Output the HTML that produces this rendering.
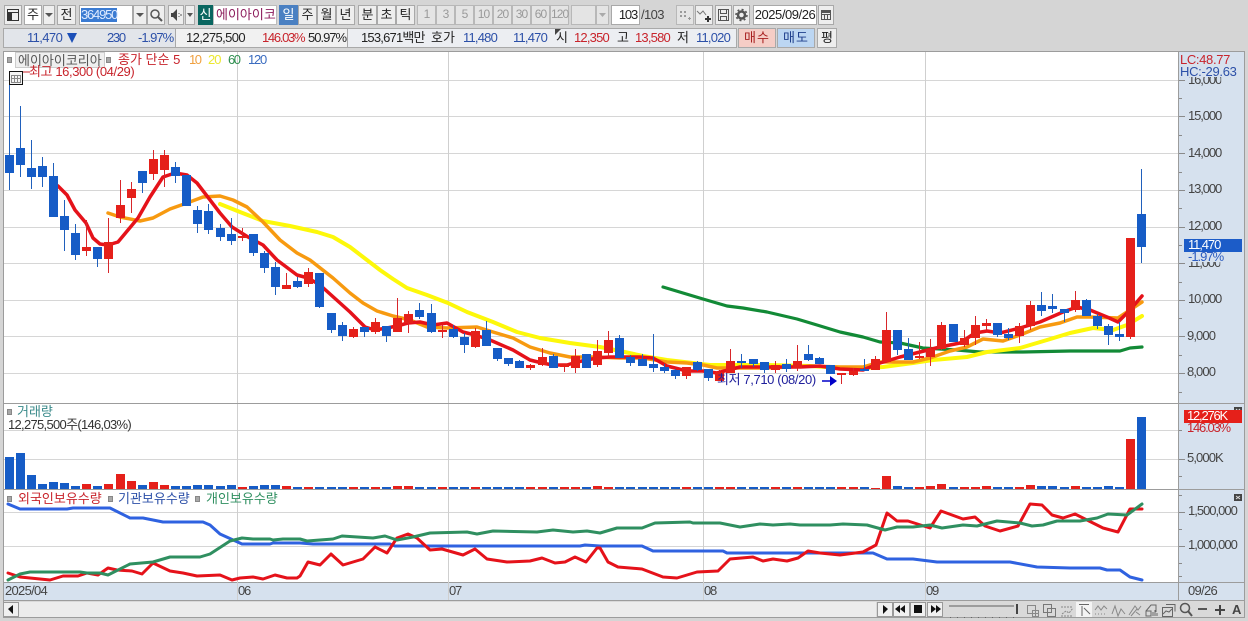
<!DOCTYPE html>
<html><head><meta charset="utf-8"><style>
html,body{margin:0;padding:0}
body{width:1248px;height:621px;overflow:hidden;background:#d5d5d5;position:relative;font:13px "Liberation Sans","Noto Sans CJK KR",sans-serif;color:#222}
.b,.t{position:absolute;box-sizing:border-box;white-space:nowrap}
.t{line-height:14px;height:14px}
.b{border:1px solid #a9a9a9;background:#eeeeee;text-align:center;line-height:17px;height:20px;top:5px}
.d{color:#999;background:#e4e4e4;border-color:#b8b8b8;font-size:12px;letter-spacing:-.9px}
.w{background:#fff}
.r{color:#c8242c}.bl{color:#2c50a8}
.a{color:#444;letter-spacing:-1.1px}
svg{position:absolute;left:0;top:0}
</style></head><body>
<!-- row 1 -->
<div class="b" style="left:4px;width:18px"><svg width="16" height="18"><path d="M2.500 3.500h11v11h-11zM2.500 6.500h11M6.500 6.500v8" fill="none" stroke="#333"/><path d="M3 7h3v7H3z" fill="#333"/></svg></div>
<div class="b w" style="left:24px;width:18px">주</div>
<div class="b" style="left:43px;width:12px"><svg width="10" height="18"><path d="M1 7h8L5 11z" fill="#555"/></svg></div>
<div class="b" style="left:57px;width:19px">전</div>
<div class="b w" style="left:79px;width:54px"></div>
<div class="t" style="left:81px;top:8px;width:36px;background:#3b7bd2;color:#dfeaff;letter-spacing:-1.2px">364950</div>
<div class="b" style="left:133px;width:14px"><svg width="12" height="18"><path d="M2 7h8L6 11z" fill="#555"/></svg></div>
<div class="b" style="left:147px;width:18px"><svg width="16" height="18"><circle cx="7" cy="8" r="4" fill="none" stroke="#555" stroke-width="1.500"/><path d="M10 11l4 4" stroke="#555" stroke-width="2"/></svg></div>
<div class="b" style="left:168px;width:16px"><svg width="14" height="18"><path d="M2 7h2l4-4v12l-4-4H2z" fill="#444"/><path d="M10 7v1M10 10v1M12 8v2" stroke="#555"/></svg></div>
<div class="b" style="left:185px;width:10px"><svg width="8" height="18"><path d="M1 7h6L4 11z" fill="#555"/></svg></div>
<div class="b" style="left:198px;width:15px;background:#0a6660;color:#fff;border-color:#0a6660">신</div>
<div class="b w" style="left:213px;width:64px;overflow:hidden;color:#8c1c5c;text-align:left;padding-left:2px;border-color:#bbb">에이아이코</div>
<div class="b" style="left:279px;width:19px;background:#4a80c2;color:#fff;border-color:#4a80c2">일</div>
<div class="b" style="left:298px;width:19px">주</div><div class="b" style="left:317px;width:19px">월</div><div class="b" style="left:336px;width:19px">년</div>
<div class="b" style="left:358px;width:19px">분</div><div class="b" style="left:377px;width:19px">초</div><div class="b" style="left:396px;width:19px">틱</div>
<div class="b d" style="left:417px;width:19px">1</div><div class="b d" style="left:436px;width:19px">3</div><div class="b d" style="left:455px;width:19px">5</div><div class="b d" style="left:474px;width:19px">10</div><div class="b d" style="left:493px;width:19px">20</div><div class="b d" style="left:512px;width:19px">30</div><div class="b d" style="left:531px;width:19px">60</div><div class="b d" style="left:550px;width:19px">120</div>
<div class="b d" style="left:571px;width:25px"></div>
<div class="b d" style="left:596px;width:13px"><svg width="11" height="18"><path d="M2 7h7L5.500 11z" fill="#aaa"/></svg></div>
<div class="b w" style="left:611px;width:29px;text-align:right;padding-right:2px;letter-spacing:-1.2px">103</div>
<div class="t" style="left:641px;top:8px;color:#444;letter-spacing:-.6px">/103</div>
<div class="b d" style="left:676px;width:18px"><svg width="16" height="18"><path d="M3 5h2v2H3zM7 5h2v2H7zM3 9h2v2H3zM7 9h2v2H7zM11 12h3v1h-3zM12 11h1v3h-1z" fill="#999"/></svg></div>
<div class="b" style="left:695px;width:18px"><svg width="16" height="18"><path d="M1 5l3 3 3-3 3 4" fill="none" stroke="#777"/><path d="M9 12h6v2H9zM11 10h2v6h-2z" fill="#333"/></svg></div>
<div class="b" style="left:715px;width:17px"><svg width="15" height="18"><path d="M2.500 3.500h10v11h-10zM4.500 3.500v4h6v-4M4.500 14.500v-4h6v4" fill="none" stroke="#555"/></svg></div>
<div class="b" style="left:733px;width:17px"><svg width="15" height="18"><circle cx="7.500" cy="9" r="3.500" fill="none" stroke="#555" stroke-width="2.500"/><circle cx="7.500" cy="9" r="5.500" fill="none" stroke="#555" stroke-width="1.500" stroke-dasharray="2 2.300"/></svg></div>
<div class="b w" style="left:753px;width:64px;letter-spacing:-.45px">2025/09/26</div>
<div class="b" style="left:818px;width:16px"><svg width="14" height="18"><path d="M2.500 4.500h9v9h-9zM2.500 8.500h9M5.500 8.500v5M8.500 8.500v5" fill="none" stroke="#555"/><path d="M2 4h10v3H2z" fill="#555"/></svg></div>
<!-- row 2 -->
<div style="position:absolute;left:3px;top:28px;width:173px;height:20px;background:#e2e5ea;border:1px solid #a9a9a9;box-sizing:border-box"></div>
<div style="position:absolute;left:176px;top:28px;width:171px;height:20px;background:#f1f1f1;border-top:1px solid #a9a9a9;border-bottom:1px solid #a9a9a9;box-sizing:border-box"></div>
<div style="position:absolute;left:347px;top:28px;width:390px;height:20px;background:#eceef2;border:1px solid #a9a9a9;box-sizing:border-box"></div>
<div class="t bl" style="left:27px;top:31px;letter-spacing:-.6px">11,470</div>
<svg width="90" height="48"><path d="M67 33h10l-5 10z" fill="#1c4fb8"/></svg>
<div class="t bl" style="left:107px;top:31px;letter-spacing:-1.300px">230</div>
<div class="t bl" style="left:138px;top:31px;letter-spacing:-1px">-1.97%</div>
<div class="t" style="left:186px;top:31px;letter-spacing:-.6px">12,275,500</div>
<div class="t r" style="left:262px;top:31px;letter-spacing:-1.300px">146.03%</div>
<div class="t" style="left:308px;top:31px;letter-spacing:-1px">50.97%</div>
<div class="t" style="left:361px;top:31px;letter-spacing:-.8px">153,671백만</div>
<div class="t" style="left:431px;top:31px">호가</div>
<div class="t bl" style="left:463px;top:31px;letter-spacing:-.8px">11,480</div>
<div class="t bl" style="left:513px;top:31px;letter-spacing:-.8px">11,470</div>
<svg width="570" height="48"><path d="M555 29h6l-6 6z" fill="#444"/></svg>
<div class="t" style="left:556px;top:31px">시</div>
<div class="t r" style="left:574px;top:31px;letter-spacing:-.8px">12,350</div>
<div class="t" style="left:617px;top:31px">고</div>
<div class="t r" style="left:635px;top:31px;letter-spacing:-.8px">13,580</div>
<div class="t" style="left:677px;top:31px">저</div>
<div class="t bl" style="left:696px;top:31px;letter-spacing:-.8px">11,020</div>
<div class="b" style="left:738px;top:28px;width:38px;background:#f5cdc6;color:#a82020;letter-spacing:1px">매수</div>
<div class="b" style="left:777px;top:28px;width:38px;background:#bcd6f2;color:#20408c;letter-spacing:1px">매도</div>
<div class="b" style="left:817px;top:28px;width:20px">평</div>
<!-- chart frame -->
<div style="position:absolute;left:3px;top:51px;width:1242px;height:567px;background:#fff;border:1px solid #9c9c9c;box-sizing:border-box"></div>
<div style="position:absolute;left:1178px;top:52px;width:66px;height:530px;background:#d6e1ee;border-left:1px solid #9c9c9c;box-sizing:border-box"></div>
<div style="position:absolute;left:4px;top:582px;width:1240px;height:19px;background:#d6e1ee;border-top:1px solid #9c9c9c;border-bottom:1px solid #9c9c9c;box-sizing:border-box"></div>
<div style="position:absolute;left:4px;top:601px;width:1240px;height:16px;background:#d9d9d9"></div>
<div style="position:absolute;left:19px;top:602px;width:857px;height:15px;background:#ececec"></div>
<svg width="1248" height="621">
<g stroke="#d6d6d6" fill="none">
<path d="M4 80.500H1178M4 116.500H1178M4 153.500H1178M4 190.500H1178M4 227.500H1178M4 263.500H1178M4 300.500H1178M4 336.500H1178M4 373.500H1178M4 430.500H1178M4 459.500H1178M4 512.500H1178M4 546.500H1178"/>
<path stroke="#cfcfcf" d="M237.500 52V600M448.500 52V600M703.500 52V600M925.500 52V600"/>
</g>
<path d="M4 403.500H1244M4 489.500H1244M1178.500 582V600" stroke="#9c9c9c" fill="none"/>
<!-- axis ticks -->
<path stroke="#8a8a8a" fill="none" d="M1179 80.500h6M1179 116.500h6M1179 153.500h6M1179 190.500h6M1179 227.500h6M1179 263.500h6M1179 300.500h6M1179 336.500h6M1179 373.500h6M1179 98.500h3M1179 135.500h3M1179 172.500h3M1179 208.500h3M1179 245.500h3M1179 282.500h3M1179 318.500h3M1179 355.500h3M1179 392.500h3M1179 459.500h6M1179 430.500h3M1179 476.500h3M1179 512.500h6M1179 546.500h6M1179 495.500h3M1179 529.500h3M1179 563.500h3M1179 576.500h3"/>
<!-- moving averages -->
<g fill="none" stroke-linejoin="round" stroke-linecap="round">
<polyline stroke="#128a36" stroke-width="3.200" points="663,287 683,293 703,299 727,306 743,308 767,312 797,319 817,325 840,332 863,337 880,342 900,343 923,348 957,350 980,352 1023,352 1070,351 1120,351 1130,348 1142,347"/>
<polyline stroke="#fdf80a" stroke-width="4" points="220,204 240,212 263,221 290,226 317,232 333,237 350,247 380,270 393,279 407,288 427,295 448,303 467,312 493,322 517,332 540,338 570,343 600,347 620,351 643,356 667,360 693,363 710,365 733,365 767,365 810,366 840,368 863,368 883,367 913,363 933,360 967,357 987,352 1020,348 1047,340 1070,333 1093,328 1113,330 1127,325 1142,316"/>
<polyline stroke="#f79a10" stroke-width="3.500" points="108,213 120,217 140,221 153,218 170,209 187,203 203,197 220,196 233,200 247,207 263,222 280,240 297,253 310,260 333,278 350,293 363,303 377,311 393,316 410,320 427,327 447,328 477,327 493,332 513,338 530,347 550,353 570,357 597,357 620,358 643,358 667,362 687,363 703,365 717,368 743,368 767,368 810,366 840,367 863,367 880,362 913,362 930,358 950,351 967,347 983,339 1003,341 1020,335 1040,327 1060,323 1077,317 1090,317 1118,318 1130,310 1142,302"/>
<polyline stroke="#e5121a" stroke-width="3.500" points="58,186 67,195 75,210 86,223 93,238 100,244 108,245 118,242 128,230 138,218 150,197 163,177 175,173 187,175 197,183 207,196 220,213 232,227 248,237 263,245 277,260 297,275 308,278 320,285 350,312 365,327 375,330 387,328 397,326 408,323 420,322 433,325 447,323 463,332 475,335 490,340 513,350 530,360 542,363 553,365 567,365 577,362 597,358 610,357 620,357 640,357 653,358 667,366 687,371 703,371 717,373 728,370 740,367 767,367 800,367 820,366 840,369 863,370 880,363 900,357 920,352 940,347 960,343 975,333 987,331 1000,333 1020,328 1040,322 1063,312 1077,307 1090,310 1107,317 1118,322 1130,310 1142,296"/>
</g>
<!-- wicks -->
<path fill="none" stroke="#2060bc" d="M9.500 72V190M20.500 106V177M31.500 140V189M42.500 157V187M53.500 163V217M64.500 200V251M75.500 224V260M97.500 247V267M142.500 171V193M175.500 162V183M186.500 175V206M197.500 206V233M208.500 204V234M220.500 224V241M231.500 218V245M253.500 234V256M264.500 251V273M275.500 262V295M297.500 277V288M319.500 273V308M331.500 313V333M342.500 322V341M364.500 327V337M386.500 326V342M419.500 303V319M431.500 304V333M453.500 325V338M464.500 333V353M486.500 321V346M497.500 348V361M508.500 358V366M519.500 360V368M553.500 354V368M586.500 354V368M619.500 335V358M630.500 355V366M642.500 354V366M653.500 334V372M664.500 364V373M675.500 369V379M697.500 361V371M708.500 369V381M741.500 354V368M753.500 359V367M764.500 362V373M786.500 359V372M808.500 345V361M819.500 357V364M830.500 365V374M864.500 359V371M897.500 330V355M908.500 338V360M953.500 324V342M997.500 323V337M1008.500 328V340M1041.500 292V316M1052.500 294V313M1064.500 309V322M1086.500 299V316M1097.500 314V329M1108.500 324V345M1119.500 322V341M1141.500 169V263"/>
<path fill="none" stroke="#d8262a" d="M86.500 220V256M108.500 218V273M120.500 180V223M131.500 182V213M153.500 150V180M164.500 150V187M242.500 228V241M286.500 273V289M308.500 268V287M353.500 327V338M375.500 318V334M397.500 298V332M408.500 311V333M442.500 325V338M475.500 328V348M530.500 364V370M542.500 348V366M564.500 364V372M575.500 349V373M597.500 340V367M608.500 331V357M686.500 367V379M719.500 370V381M730.500 349V373M775.500 361V373M797.500 345V371M841.500 373V384M853.500 368V376M875.500 356V370M886.500 312V362M919.500 342V359M930.500 339V366M941.500 322V350M964.500 330V347M975.500 316V345M986.500 319V330M1019.500 323V343M1030.500 301V330M1075.500 291V312M1130.500 238V339"/>
<!-- bodies -->
<path fill="#165cc6" d="M5 155h9V173h-9zM16 148h9V165h-9zM27 168h9V177h-9zM38 166h9V177h-9zM49 176h9V217h-9zM60 216h9V230h-9zM71 233h9V255h-9zM93 247h9V259h-9zM138 171h9V183h-9zM171 167h9V176h-9zM182 175h9V206h-9zM193 210h9V224h-9zM204 211h9V230h-9zM216 228h9V237h-9zM227 234h9V241h-9zM249 234h9V253h-9zM260 253h9V268h-9zM271 267h9V287h-9zM293 281h9V287h-9zM315 273h9V307h-9zM327 313h9V330h-9zM338 325h9V336h-9zM360 327h9V332h-9zM382 326h9V336h-9zM415 310h9V317h-9zM427 313h9V332h-9zM449 329h9V337h-9zM460 337h9V345h-9zM482 330h9V346h-9zM493 348h9V359h-9zM504 358h9V364h-9zM515 361h9V368h-9zM549 356h9V368h-9zM582 354h9V368h-9zM615 338h9V358h-9zM626 357h9V363h-9zM638 359h9V366h-9zM649 364h9V368h-9zM660 367h9V371h-9zM671 370h9V376h-9zM693 362h9V370h-9zM704 369h9V378h-9zM737 361h9V363h-9zM749 359h9V364h-9zM760 362h9V370h-9zM782 364h9V369h-9zM804 354h9V360h-9zM815 358h9V364h-9zM826 365h9V374h-9zM860 369h9V371h-9zM893 330h9V350h-9zM904 349h9V360h-9zM949 324h9V342h-9zM993 323h9V335h-9zM1004 334h9V338h-9zM1037 305h9V311h-9zM1048 306h9V309h-9zM1060 309h9V313h-9zM1082 300h9V316h-9zM1093 316h9V326h-9zM1104 326h9V335h-9zM1115 334h9V337h-9zM1137 214h9V247h-9z"/>
<path fill="#e5201a" d="M82 247h9V251h-9zM104 242h9V259h-9zM116 205h9V218h-9zM127 189h9V198h-9zM149 159h9V174h-9zM160 155h9V170h-9zM238 236h9V238h-9zM282 285h9V289h-9zM304 272h9V284h-9zM349 329h9V337h-9zM371 322h9V332h-9zM393 318h9V332h-9zM404 314h9V323h-9zM438 330h9V332h-9zM471 331h9V347h-9zM526 365h9V368h-9zM538 357h9V365h-9zM560 364h9V367h-9zM571 356h9V368h-9zM593 351h9V365h-9zM604 340h9V353h-9zM682 367h9V376h-9zM715 372h9V381h-9zM726 361h9V373h-9zM771 365h9V370h-9zM793 361h9V368h-9zM837 373h9V375h-9zM849 371h9V375h-9zM871 359h9V370h-9zM882 330h9V362h-9zM915 356h9V358h-9zM926 349h9V357h-9zM937 325h9V349h-9zM960 338h9V345h-9zM971 325h9V338h-9zM982 323h9V326h-9zM1015 326h9V336h-9zM1026 305h9V326h-9zM1071 300h9V310h-9zM1126 238h9V337h-9z"/>
<!-- volume -->
<path fill="#165cc6" d="M5 457h9V489h-9zM16 453h9V489h-9zM27 475h9V489h-9zM38 484h9V489h-9zM49 482h9V489h-9zM60 483h9V489h-9zM71 486h9V489h-9zM93 486h9V489h-9zM138 485h9V489h-9zM171 486h9V489h-9zM182 486h9V489h-9zM193 485h9V489h-9zM204 485h9V489h-9zM216 486h9V489h-9zM227 485h9V489h-9zM249 486h9V489h-9zM260 485h9V489h-9zM271 485h9V489h-9zM293 487h9V489h-9zM315 487h9v2h-9zM327 487h9v2h-9zM338 487h9v2h-9zM360 487h9v2h-9zM382 487h9v2h-9zM415 487h9v2h-9zM427 487h9v2h-9zM449 487h9v2h-9zM460 487h9v2h-9zM482 487h9v2h-9zM493 487h9v2h-9zM504 487h9v2h-9zM515 487h9v2h-9zM549 487h9v2h-9zM582 487h9v2h-9zM615 487h9v2h-9zM626 487h9v2h-9zM638 487h9v2h-9zM649 487h9v2h-9zM660 487h9v2h-9zM671 487h9v2h-9zM693 487h9v2h-9zM704 487h9v2h-9zM737 487h9v2h-9zM749 487h9v2h-9zM760 487h9v2h-9zM782 487h9v2h-9zM804 487h9v2h-9zM815 487h9v2h-9zM826 487h9v2h-9zM860 487h9v2h-9zM893 486h9v3h-9zM904 487h9v2h-9zM949 487h9v2h-9zM993 487h9v2h-9zM1004 487h9v2h-9zM1037 486h9v3h-9zM1048 486h9v3h-9zM1060 487h9v2h-9zM1082 487h9v2h-9zM1093 487h9v2h-9zM1104 486h9v3h-9zM1115 487h9v2h-9zM1137 417h9V489h-9z"/>
<path fill="#e5201a" d="M82 484h9V489h-9zM104 484h9V489h-9zM116 474h9V489h-9zM127 481h9V489h-9zM149 482h9V489h-9zM160 485h9V489h-9zM238 487h9V489h-9zM282 486h9V489h-9zM304 487h9v2h-9zM349 487h9v2h-9zM371 487h9v2h-9zM393 486h9v3h-9zM404 486h9v3h-9zM438 487h9v2h-9zM471 487h9v2h-9zM526 487h9v2h-9zM538 487h9v2h-9zM560 487h9v2h-9zM571 487h9v2h-9zM593 486h9v3h-9zM604 487h9v2h-9zM682 487h9v2h-9zM715 487h9v2h-9zM726 487h9v2h-9zM771 487h9v2h-9zM793 487h9v2h-9zM837 487h9v2h-9zM849 487h9v2h-9zM871 488h9v1h-9zM882 476h9V489h-9zM915 487h9v2h-9zM926 486h9v3h-9zM937 484h9v5h-9zM960 487h9v2h-9zM971 487h9v2h-9zM982 486h9v3h-9zM1015 487h9v2h-9zM1026 485h9v4h-9zM1071 486h9v3h-9zM1126 439h9V489h-9z"/>
<!-- indicators -->
<g fill="none" stroke-width="3" stroke-linejoin="round" stroke-linecap="round">
<polyline stroke="#2f62e0" points="8,504 20,509 67,509 73,508 110,508 130,518 143,518 163,522 203,522 210,525 220,534 242,544 270,544 273,543 300,543 313,544 390,544 395,546 580,546 585,545 600,546 642,546 653,551 723,551 727,553 873,553 887,559 913,559 937,562 1010,562 1037,567 1070,568 1100,568 1107,570 1120,570 1130,577 1142,580"/>
<polyline stroke="#e5121a" points="8,573 20,577 50,580 63,576 78,576 87,573 98,575 108,568 117,570 132,571 142,574 153,563 170,571 183,573 197,576 220,575 232,580 240,578 253,577 263,579 275,575 287,578 297,578 300,576 308,562 320,565 331,554 343,565 363,559 375,547 387,553 397,538 408,534 417,538 430,550 442,549 463,555 475,549 487,559 507,562 530,561 542,558 555,563 565,562 575,557 586,562 597,548 600,548 608,562 618,567 642,569 663,577 677,578 697,572 718,571 730,559 753,557 763,561 773,559 787,561 798,558 808,551 820,553 840,555 863,552 876,545 887,513 897,521 908,521 930,528 941,511 963,519 975,517 985,526 1000,531 1018,526 1030,504 1042,505 1052,515 1063,518 1075,514 1103,528 1118,532 1130,509 1142,509"/>
<polyline stroke="#2f8f60" points="8,580 20,574 30,572 80,572 87,573 100,573 108,575 130,564 153,562 170,557 200,557 210,554 230,541 242,538 253,539 270,539 273,540 283,539 300,539 307,541 333,539 342,536 373,538 385,536 397,540 413,537 430,533 467,532 477,534 493,531 537,532 553,530 573,532 587,531 600,533 617,528 642,528 655,523 690,522 693,523 720,523 740,527 760,524 773,525 790,524 800,525 830,525 843,524 867,525 885,530 897,527 913,527 930,525 942,528 963,525 977,526 997,521 1020,523 1032,526 1043,525 1057,521 1080,521 1097,518 1108,514 1127,515 1142,504"/>
</g>
<!-- legend squares -->
<path fill="#a8a8a8" stroke="#888" d="M7.500 57.500h4v5h-4zM106.500 57.500h4v5h-4zM7.500 409.500h4v5h-4zM7.500 496.500h4v5h-4zM108.500 496.500h4v5h-4zM195.500 496.500h4v5h-4z"/>
<!-- arrow low -->
<path d="M822 381h9" stroke="#0000c8" stroke-width="1.500"/><path d="M830 376l7 5-7 5z" fill="#0000c8"/>
<path d="M18 72h12" stroke="#c8242c"/>
<!-- close icons -->
<path fill="#444" d="M1234 407h8v8h-8zM1234 494h8v7h-8z"/><path stroke="#ddd" d="M1236 409l4 4M1240 409l-4 4M1236 496l4 3M1240 496l-4 3"/>
<!-- table icon -->
<path fill="#f4f4f4" stroke="#111" d="M9.500 71.500h13v13h-13z"/><path fill="none" stroke="#888" d="M11.500 75.500h9v7h-9zM11.500 78.500h9M14.500 75.500v7M17.500 75.500v7"/>
<!-- right badges -->
<rect x="1184" y="239" width="58" height="13" fill="#1c5cc8"/>
<rect x="1184" y="410" width="58" height="13" fill="#e5201a"/>
<!-- bottom buttons -->
<g fill="#f0f0f0" stroke="#999"><rect x="3.500" y="602.500" width="15" height="14"/><rect x="877.500" y="602.500" width="15" height="14"/><rect x="893.500" y="602.500" width="16" height="14"/><rect x="910.500" y="602.500" width="15" height="14"/><rect x="927.500" y="602.500" width="15" height="14"/></g>
<path fill="#111" d="M8 609l5-4v9zM883 605l5 4-5 5zM905 605v8l-5-4zM900 605v8l-5-4zM914 605h8v8h-8zM931 605l5 4-5 4zM936 605l5 4-5 4z"/>
<path stroke="#888" fill="none" stroke-width="1.500" d="M949 606h65"/>
<path stroke="#666" fill="none" stroke-dasharray="1 6" d="M950 617.500h66"/>
<path stroke="#444" stroke-width="2" d="M1017 604v10"/>
<rect x="1076" y="602" width="16" height="15" fill="#f4f4f4"/>
<g fill="none" stroke="#888">
<path d="M1027.500 605.500h8v8h-8zM1032.500 610.500h6v6h-6zM1032.500 613.500h6M1035.500 610.500v6"/>
<path d="M1043.500 604.500h8v8h-8zM1047.500 608.500h8v8h-8z" stroke="#777"/>
<path d="M1061 607h12M1061 616h12M1062 614l4-3 3 2 4-5" stroke-dasharray="2 1"/>
<path d="M1079 604.500h10M1082 606v10M1084 608l6 6" stroke="#666"/>
<path d="M1095 610l3-4 3 4 3-4 3 3M1095 614h1M1098 614h1M1101 614h1M1104 614h1"/>
<path d="M1112 614l3-8 3 10 3-7 4 5"/>
<path d="M1129 615l6-9 3 4 3-4M1131 616l6-7M1136 612l4 3"/>
<path d="M1146 611l5-6h5v7M1146 611h5v5h-5zM1153 612v4M1155 610v6M1157 613v3" stroke="#666"/>
<path d="M1166 604.500h9v7M1162.500 607.500h10v9h-10zM1163 614l3-3 3 1 3-3" stroke="#666"/>
</g>
<circle cx="1185" cy="608" r="4.500" fill="none" stroke="#555" stroke-width="1.500"/><path d="M1188 611l4 5" stroke="#555" stroke-width="2"/>
<path d="M1198 609h9" stroke="#555" stroke-width="2"/><path d="M1215 610h10M1220 605v10" stroke="#444" stroke-width="2"/>
</svg>
<!-- chart text -->
<div class="t" style="left:15px;top:52px;width:90px;height:16px;line-height:15px;background:#efefef;border:1px solid #ccc;box-sizing:border-box;padding-left:2px;color:#555;overflow:hidden">에이아이코리아</div>
<div class="t" style="left:118px;top:53px;color:#c8242c">종가 단순 5</div>
<div class="t" style="left:189px;top:53px;color:#f0a040;letter-spacing:-1.500px">10</div>
<div class="t" style="left:208px;top:53px;color:#ece830;letter-spacing:-1px">20</div>
<div class="t" style="left:228px;top:53px;color:#2f8f50;letter-spacing:-1.500px">60</div>
<div class="t" style="left:248px;top:53px;color:#3a6cc0;letter-spacing:-1.200px">120</div>
<div class="t" style="left:29px;top:65px;color:#c8242c;letter-spacing:-.4px">최고 16,300 (04/29)</div>
<div class="t" style="left:717px;top:373px;color:#20209c;letter-spacing:-.38px">최저 7,710 (08/20)</div>
<div class="t" style="left:1180px;top:53px;color:#c8242c;letter-spacing:-.35px">LC:48.77</div>
<div class="t" style="left:1180px;top:65px;color:#2c50a8;letter-spacing:-.3px">HC:-29.63</div>
<div class="t a" style="left:1188px;top:73px;clip-path:inset(4px 0 0 0)">16,000</div>
<div class="t a" style="left:1188px;top:109px">15,000</div>
<div class="t a" style="left:1188px;top:146px">14,000</div>
<div class="t a" style="left:1188px;top:182px">13,000</div>
<div class="t a" style="left:1188px;top:219px">12,000</div>
<div class="t a" style="left:1188px;top:256px;clip-path:inset(6px 0 0 0)">11,000</div>
<div class="t a" style="left:1188px;top:292px">10,000</div>
<div class="t a" style="left:1187px;top:329px;letter-spacing:-.9px">9,000</div>
<div class="t a" style="left:1187px;top:365px;letter-spacing:-.9px">8,000</div>
<div class="t" style="left:1188px;top:238px;color:#fff;letter-spacing:-1.100px">11,470</div>
<div class="t" style="left:1188px;top:250px;color:#2c5cc0;letter-spacing:-1px">-1.97%</div>
<div class="t" style="left:1187px;top:409px;color:#fff;letter-spacing:-1.200px">12,276K</div>
<div class="t" style="left:1187px;top:421px;color:#c8242c;letter-spacing:-1.200px">146.03%</div>
<div class="t a" style="left:1187px;top:451px;letter-spacing:-.9px">5,000K</div>
<div class="t a" style="left:1188px;top:504px;letter-spacing:-1px">1,500,000</div>
<div class="t a" style="left:1188px;top:538px;letter-spacing:-1px">1,000,000</div>
<div class="t" style="left:17px;top:405px;color:#3a8a8a">거래량</div>
<div class="t" style="left:8px;top:418px;letter-spacing:-.7px;color:#333">12,275,500주(146,03%)</div>
<div class="t" style="left:18px;top:492px;color:#c8242c">외국인보유수량</div>
<div class="t" style="left:118px;top:492px;color:#2c50a8">기관보유수량</div>
<div class="t" style="left:206px;top:492px;color:#2f8f60">개인보유수량</div>
<div class="t a" style="left:5px;top:584px;letter-spacing:-.7px">2025/04</div>
<div class="t a" style="left:238px;top:584px;letter-spacing:-1.200px">06</div>
<div class="t a" style="left:449px;top:584px;letter-spacing:-1.200px">07</div>
<div class="t a" style="left:704px;top:584px;letter-spacing:-1.200px">08</div>
<div class="t a" style="left:926px;top:584px;letter-spacing:-1.200px">09</div>
<div class="t a" style="left:1188px;top:584px;letter-spacing:-.7px">09/26</div>
<div class="t" style="left:1232px;top:603px;font-weight:bold;font-size:13px;color:#444">A</div>
</body></html>
